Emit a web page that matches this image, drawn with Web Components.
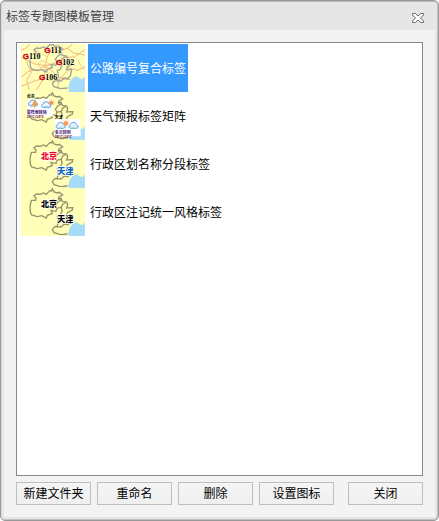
<!DOCTYPE html>
<html lang="zh-CN">
<head>
<meta charset="utf-8">
<title>标签专题图模板管理</title>
<style>
html, body { height: 100%; }
body { margin: 0; background: #fff; font: 12px/16px "Liberation Sans", "Noto Sans CJK SC", sans-serif; color: #000; }
</style>
</head>
<body>
<template-dialog>
  <span slot="title">标签专题图模板管理</span>
  <template-list>
    <template-item kind="road" selected>公路编号复合标签</template-item>
    <template-item kind="weather">天气预报标签矩阵</template-item>
    <template-item kind="range">行政区划名称分段标签</template-item>
    <template-item kind="uniform">行政区注记统一风格标签</template-item>
  </template-list>
  <push-button slot="actions">新建文件夹</push-button>
  <push-button slot="actions">重命名</push-button>
  <push-button slot="actions">删除</push-button>
  <push-button slot="actions">设置图标</push-button>
  <push-button slot="close">关闭</push-button>
</template-dialog>
<script>
const define = (name, html, setup) => customElements.define(name, class extends HTMLElement {
  constructor() {
    super();
    const root = this.attachShadow({ mode: 'open' });
    root.innerHTML = html;
    if (setup) setup(this, root);
  }
});

define('template-dialog', `
<style>
:host { display: flex; flex-direction: column; box-sizing: border-box; height: 100%; border: 1px solid #999; border-radius: 5px; background: #e6e6e6; padding: 0 3px 3px; box-shadow: inset 0 1px #b8b8b8, inset -1px -1px #c4c4c4, inset 1px 0 #d8d8d8; }
header { display: flex; align-items: center; justify-content: space-between; height: 29px; flex: none; padding: 2px 11px 0 2px; box-sizing: border-box; color: #444; }
header button { display: flex; border: 0; padding: 2px 0 0; background: none; }
main { flex: 1; display: flex; flex-direction: column; gap: 6px; padding: 12px; background: #f3f3f3; min-height: 0; }
footer { display: flex; gap: 14px; }
.group { flex: 4; display: grid; grid-template-columns: repeat(4, 1fr); gap: 6px; }
.last { width: 75px; }
</style>
<header><slot name="title"></slot>
<button aria-label="关闭窗口"><svg width="12" height="10" viewBox="0 0 12 10"><path d="M.5 .5H3.5L6 3L8.5 .5H11.5V2L8.5 5L11.5 8V9.5H8.5L6 7L3.5 9.5H.5V8L3.5 5L.5 2Z" fill="#fff" stroke="#6c6c6c"/></svg></button></header>
<main><slot></slot><footer><div class="group"><slot name="actions"></slot></div><div class="last"><slot name="close"></slot></div></footer></main>`);

define('template-list', `
<style>
:host { display: block; flex: 1; min-height: 0; box-sizing: border-box; border: 1px solid #828790; background: #fff; padding: 1px 4px; overflow: auto; }
</style><slot></slot>`);

define('push-button', `
<style>
:host { display: block; }
button { display: block; width: 100%; height: 23px; padding: 0; border: 1px solid #bebebe; background: linear-gradient(#f5f5f5, #efefef); font: inherit; color: #000; white-space: nowrap; }
</style><button><slot></slot></button>`);

const regions = `
<path d="M45 62L49 43L62 43L63 36L57 29L65 24L76 25L85 21L94 25L104 14L110 15L112 8L117 18L127 21L133 19L143 27L132 33L130 39L138 43L129 47L121 58L126 66L123 76L108 74L112 83L97 88L94 96L80 89L67 92L50 87L46 78Z"/>
<path d="M131 38L138 37L142 46L155 48L158 57L155 66L173 65L172 72L157 80L154 89L170 89L166 107L159 116L148 114L138 123L119 122L112 131L117 140L137 146L158 144M123 67L139 64L141 76L135 89L127 91L130 108L126 121M139 64L142 55L152 49"/>`;
const sea = `<path d="M210 110L204 117L197 117L185 109L174 113L165 125L160 144L164 150H210Z" fill="#a5dafa" stroke="#bce4de" stroke-width="2"/>`;
const road = (x, y, n) => `<text class="sign" x="${x}" y="${y}"><tspan class="g">G</tspan><tspan>${n}</tspan></text>`;
const cloud = (x, y) => `<g transform="translate(${x} ${y})"><path d="M2 17Q-2 9 6 8Q7 0 15 1Q22 1 23 8Q31 9 28 17Q24 20 15 19Q5 20 2 17Z" fill="#eef7ff" stroke="#65a8d6" stroke-width="3"/><path d="M7 15H23" stroke="#a9d2ed" stroke-width="3"/></g>`;
const sun = (x, y) => `<g transform="translate(${x} ${y})"><circle r="6" fill="#ff8b36"/><path d="M0-10V10M-10 0H10M-7-7L7 7M7-7L-7 7" stroke="#f79a50" stroke-width="2"/></g>`;

const art = {
  road: `<path d="M162 149H210V156H160Z" fill="#a5dafa"/><g fill="none" stroke="#f1b67e" stroke-width="3">
<path d="M18 31L35 23L48 6M18 52L38 63L61 72L91 77L118 70L147 53L178 51L210 29M18 111L42 93L73 89L91 77L96 52L111 26L137 8M91 77L88 113L64 150M91 77L118 99L140 116L166 119M108 28L137 33L158 24L180 6M155 24L176 39L210 45M149 57L159 83L188 91L210 80M18 139L50 126L87 114L118 125L146 112M43 150L35 122L49 97L34 65M127 148L132 119L160 90"/>
<path d="M63 30L79 41L95 49M78 87L70 70L82 62L99 68L106 82L91 91L78 87M188 57L196 75L210 91" stroke="#f3cf9c"/></g>
<g fill="none" stroke="#a3a297" stroke-width="4">${regions}</g>
${road(88, 38, '111')}${road(23, 58, '110')}${road(123, 76, '102')}${road(72, 121, '106')}`,
  weather: `<g class="border">${regions}</g><path d="M35 27H114V79H35ZM118 87H197V139H118Z" fill="#fff"/>
${sun(109, 38)}${cloud(79, 34)}${cloud(39, 29)}<path d="M59 31L50 46H60L55 59L69 40H60L65 31Z" fill="#f49835"/>
${sun(153, 100)}${cloud(122, 96)}<g transform="translate(0 2)">${cloud(161, 94)}</g>
<g class="note"><text x="35" y="24">北京</text><text x="35" y="73" fill="#4c2176">雷阵雨转晴</text><text x="35" y="84" fill="#6b174d" class="temp">29℃/18℃</text><text x="119" y="86">天津</text><text x="119" y="133" fill="#4c2176">多云转阴</text><text x="119" y="144" fill="#6b174d" class="temp">29℃/18℃</text></g>`,
  range: `<g class="border">${regions}</g><g class="city"><text x="78" y="62" fill="#f00020">北京</text><text x="127" y="109" fill="#0860bd">天津</text></g>`,
  uniform: `<g class="border">${regions}</g><g class="city"><text x="78" y="62">北京</text><text x="127" y="109">天津</text></g>`
};

define('template-item', `
<style>
:host { display: flex; height: 48px; gap: 3px; }
svg { flex: none; display: block; }
button { display: flex; align-items: center; border: 0; padding: 2px 2px 0; background: none; color: #000; font: inherit; white-space: nowrap; }
:host([selected]) button { background: #39f; color: #fff; }
.border { fill: none; stroke: #98936e; stroke-width: 4; }
.sign { font: bold 24px "Liberation Serif", serif; fill: #000; paint-order: stroke; stroke: #ffffd0; stroke-width: 3px; }
.sign .g { font: bold 24px "Liberation Sans", sans-serif; fill: #c40022; stroke: #c40022; stroke-width: 1px; }
.city { font: 900 24px "Noto Sans CJK SC", sans-serif; paint-order: stroke; stroke: #fff; stroke-width: 4px; }
.note { font: bold 12px "Noto Sans CJK SC", sans-serif; }
.temp { font-size: 11px; }
</style><svg width="64" height="48" aria-hidden="true"></svg><button><slot></slot></button>`, (host, root) => {
  const kind = host.getAttribute('kind');
  const svg = root.querySelector('svg');
  // The road sheet is framed slightly lower on the same map.
  svg.setAttribute('viewBox', `18 ${kind === 'road' ? 12 : 6} 192 144`);
  svg.innerHTML = '<path d="M18 6H210V156H18Z" fill="#ffffb8"/>' + sea + art[kind];
});
</script>
</body>
</html>
